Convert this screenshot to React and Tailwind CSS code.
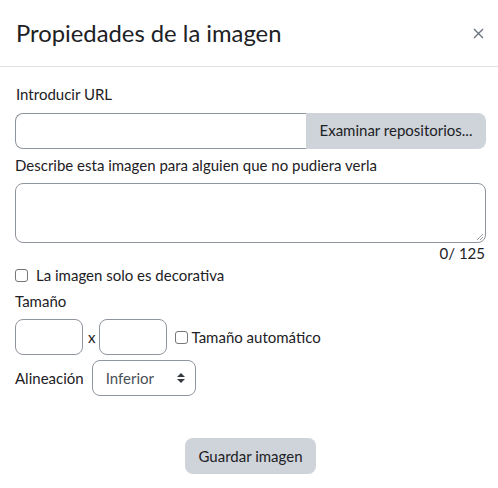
import React from "react";

const font = { fontFamily: "Lato, 'Noto Sans', sans-serif" };

function Field({ className = "" }) {
  return <div className={"rounded-lg border border-[#8f959e] bg-white " + className} />;
}

export default function App() {
  return (
    <div className="w-[498px] h-[488px] bg-white text-[#1d2125] text-[15px] leading-[22.5px]" style={font}>
      {/* Header */}
      <div className="h-[67px] flex items-center justify-between pl-[16px] pr-[14px] border-b border-[#dee2e6]">
        <h5 className="text-[23.8px] leading-[28px] font-normal">Propiedades de la imagen</h5>
        <svg width="11" height="11" viewBox="0 0 11 11" className="text-[#6a737b]">
          <path d="M1 1 L10 10 M10 1 L1 10" stroke="currentColor" strokeWidth="1.4" />
        </svg>
      </div>

      {/* Body */}
      <div className="pl-[15px] pr-[12px] pt-[16px]">
        <div className="mb-[7px] ml-[1px]">Introducir URL</div>
        <div className="flex h-[36px]">
          <div className="flex-1 rounded-l-lg border border-r-0 border-[#8f959e]" />
          <button className="w-[180px] rounded-r-lg bg-[#ced4da] text-[15px]">Examinar repositorios...</button>
        </div>

        <div className="mt-[5px] mb-[7px]">Describe esta imagen para alguien que no pudiera verla</div>
        <div className="relative h-[60px] rounded-lg border border-[#8f959e]">
          <svg width="8" height="8" viewBox="0 0 8 8" className="absolute right-[1px] bottom-[1px]">
            <path d="M7 1 L1 7 M7 4 L4 7" stroke="#9aa0a6" strokeWidth="1" />
          </svg>
        </div>
        <div className="text-right leading-[20px] pr-[1px]">0/ 125</div>

        <label className="flex items-center gap-[8px] mt-[1px]">
          <span className="w-[13px] h-[13px] rounded-[3px] border border-[#767676] bg-white" />
          <span>La imagen solo es decorativa</span>
        </label>

        <div className="mt-[3px]">Tamaño</div>
        <div className="flex items-center mt-[7px]">
          <Field className="w-[68px] h-[36px]" />
          <span className="pl-[5px] pr-[4px]">x</span>
          <Field className="w-[68px] h-[36px]" />
          <span className="ml-[8px] w-[13px] h-[13px] rounded-[3px] border border-[#767676] bg-white" />
          <span className="ml-[3px]">Tamaño automático</span>
        </div>

        <div className="flex items-center mt-[5px]">
          <span>Alineación</span>
          <div className="ml-[8px] w-[104px] h-[36px] rounded-lg border border-[#8f959e] flex items-center justify-between pl-[13px] pr-[10px] text-[#495057]">
            <span>Inferior</span>
            <svg width="8" height="10" viewBox="0 0 8 10">
              <path d="M4 0 L8 4 H0 Z M4 10 L8 6 H0 Z" fill="#343a40" />
            </svg>
          </div>
        </div>

        <div className="flex justify-center mt-[42px]">
          <button className="h-[36px] px-[13px] rounded-lg bg-[#ced4da] text-[15px]">Guardar imagen</button>
        </div>
      </div>
    </div>
  );
}
